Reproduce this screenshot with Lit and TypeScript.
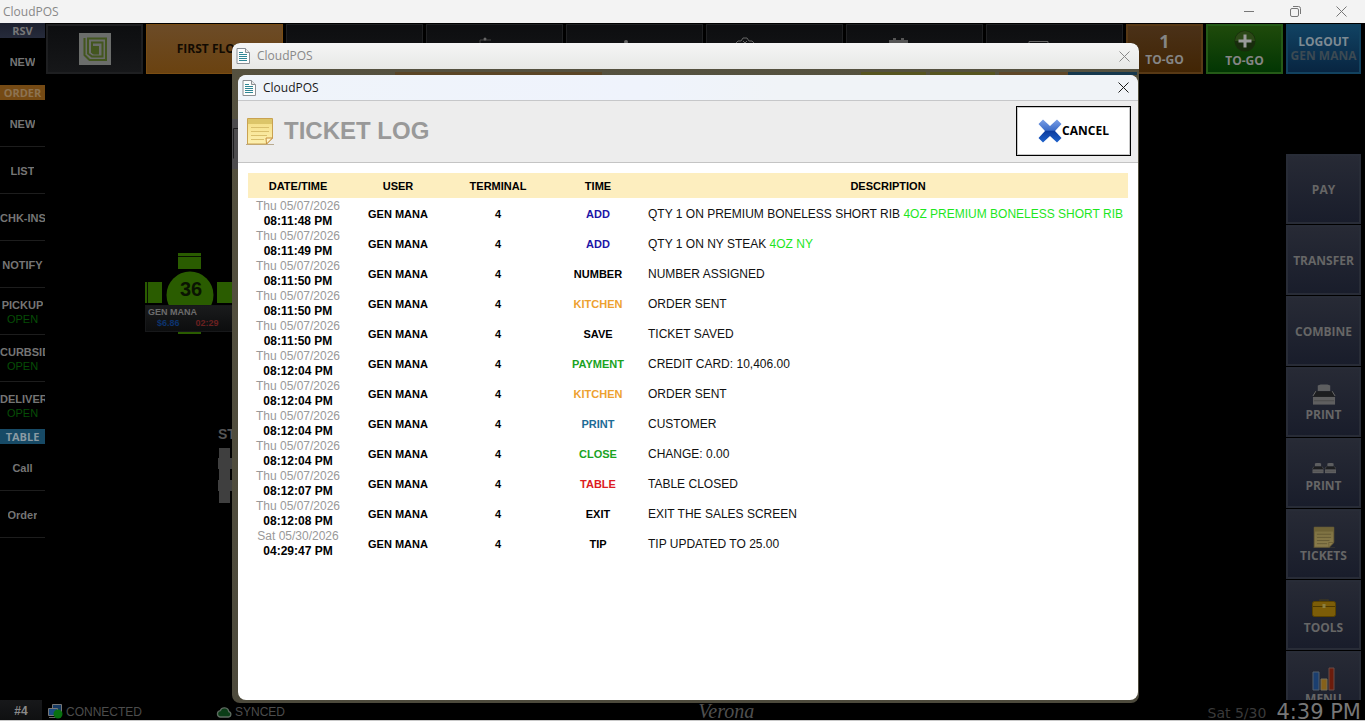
import { LitElement, html, css, svg, nothing } from "lit";
import { customElement, property } from "lit/decorators.js";
import { classMap } from "lit/directives/class-map.js";

interface LogEntry {
  day: string;
  time: string;
  action: string;
  tone: string;
  text: string;
  extra?: string;
}

const LOG: LogEntry[] = [
  { day: "Thu 05/07/2026", time: "08:11:48 PM", action: "ADD", tone: "navy", text: "QTY 1 ON PREMIUM BONELESS SHORT RIB", extra: "4OZ PREMIUM BONELESS SHORT RIB" },
  { day: "Thu 05/07/2026", time: "08:11:49 PM", action: "ADD", tone: "navy", text: "QTY 1 ON NY STEAK", extra: "4OZ NY" },
  { day: "Thu 05/07/2026", time: "08:11:50 PM", action: "NUMBER", tone: "plain", text: "NUMBER ASSIGNED" },
  { day: "Thu 05/07/2026", time: "08:11:50 PM", action: "KITCHEN", tone: "orange", text: "ORDER SENT" },
  { day: "Thu 05/07/2026", time: "08:11:50 PM", action: "SAVE", tone: "plain", text: "TICKET SAVED" },
  { day: "Thu 05/07/2026", time: "08:12:04 PM", action: "PAYMENT", tone: "green", text: "CREDIT CARD: 10,406.00" },
  { day: "Thu 05/07/2026", time: "08:12:04 PM", action: "KITCHEN", tone: "orange", text: "ORDER SENT" },
  { day: "Thu 05/07/2026", time: "08:12:04 PM", action: "PRINT", tone: "teal", text: "CUSTOMER" },
  { day: "Thu 05/07/2026", time: "08:12:04 PM", action: "CLOSE", tone: "green", text: "CHANGE: 0.00" },
  { day: "Thu 05/07/2026", time: "08:12:07 PM", action: "TABLE", tone: "red", text: "TABLE CLOSED" },
  { day: "Thu 05/07/2026", time: "08:12:08 PM", action: "EXIT", tone: "plain", text: "EXIT THE SALES SCREEN" },
  { day: "Sat 05/30/2026", time: "04:29:47 PM", action: "TIP", tone: "plain", text: "TIP UPDATED TO 25.00" },
];

const SIDE: { head: string; tone: string; items: [string, boolean][] }[] = [
  { head: "RSV", tone: "slate", items: [["NEW", false]] },
  {
    head: "ORDER",
    tone: "amber",
    items: [["NEW", false], ["LIST", false], ["CHK-INS", false], ["NOTIFY", false], ["PICKUP", true], ["CURBSIDE", true], ["DELIVERY", true]],
  },
  { head: "TABLE", tone: "blue", items: [["Call", false], ["Order", false]] },
];

const docIcon = html`<svg width="14" height="16" viewBox="0 0 14 16">
  <path d="M1 .5h8.500l4 4v11h-12.500z" fill="#fdfdfd" stroke="#8a8f94" />
  <path d="M9.500.5v4h4" fill="#e8e8e8" stroke="#8a8f94" />
  <path d="M3 4.500h4M3 6.500h8M3 8.500h8M3 10.500h8M3 12.500h8" stroke="#2f8796" />
</svg>`;

const noteIcon = (size: number, dim: boolean) => html`<svg width=${size} height=${size} viewBox="0 0 28 28">
  <defs>
    <linearGradient id="paper" x1="0" y1="0" x2="0" y2="1">
      <stop offset="0" stop-color=${dim ? "#7c7040" : "#f4dd83"} />
      <stop offset="1" stop-color=${dim ? "#8a7c4c" : "#fdf0b0"} />
    </linearGradient>
  </defs>
  <path d="M0 27.500h28" stroke=${dim ? "#3a3832" : "#b9aa90"} />
  <path d="M1.500 1.500h25v19.500l-6 6h-19z" fill="url(#paper)" stroke=${dim ? "#6a5d35" : "#c9a251"} />
  <path d="M2 2h24v5h-24z" fill=${dim ? "#6f6336" : "#dcc569"} />
  <path d="M5 10.500h18M5 14.500h18M5 18.500h16M5 22.500h13" stroke=${dim ? "#5e5430" : "#d9bf6c"} />
  <path d="M26.500 21h-6.500l.5 6z" fill=${dim ? "#8a7c4c" : "#fff3c8"} stroke=${dim ? "#6a5d35" : "#c48f3c"} />
</svg>`;

const printerShape = svg`
  <path d="M6 8v-6l3-1h7l3 1v6z" fill="#5d5e60" />
  <path d="M3 8h19l2 6h-23z" fill="#1d1e20" />
  <path d="M1 13l3-5M24 13l-3-5" stroke="#6d6d6d" />
  <path d="M1 14h23v8h-23z" fill="#5f5f60" />
  <path d="M2 18h21" stroke="#4a4a4a" />
`;

const closeGlyph = (size: number) => html`<svg width=${size} height=${size} viewBox="0 0 11 11">
  <path d="M.5.5l10 10M10.500.5l-10 10" stroke="currentColor" fill="none" />
</svg>`;

@customElement("title-bar")
export class TitleBar extends LitElement {
  @property() label = "";
  @property({ type: Boolean }) active = false;

  static styles = css`
    :host { display: block; }
    .bar {
      display: flex; align-items: center; gap: 7px; height: 26px; padding: 0 9px 0 4px;
      border-radius: 8px 8px 0 0; background: linear-gradient(#f5f5f5, #e7e8e6); color: #888;
      font: 12px/16px "Open Sans", "Noto Sans", sans-serif;
    }
    .bar.active {
      height: 25px; background: linear-gradient(90deg, #eff4fa, #eff3fc 45%, #f0f3f7 60%);
      color: #1a1a1a; border-bottom: 1px solid #c6c7c9;
    }
    .label { flex: 1; }
    .close { display: flex; border: 0; padding: 0; background: none; color: inherit; }
  `;

  render() {
    return html`<div class=${classMap({ bar: true, active: this.active })}>
      ${docIcon}<span class="label">${this.label}</span>
      <button class="close" aria-label="Close">${closeGlyph(11)}</button>
    </div>`;
  }
}

@customElement("ticket-log")
export class TicketLog extends LitElement {
  static styles = css`
    :host { display: flex; flex-direction: column; flex: 1; overflow: hidden; border-radius: 8px; background: #fff; color: #111; }
    .head {
      display: flex; align-items: center; gap: 10px; box-sizing: border-box; height: 62px;
      padding: 0 7px 1px 8px; background: #ededed; border-bottom: 1px solid #c4c4c4;
    }
    h1 { flex: 1; margin: 0; font-size: 24px; line-height: 28px; font-weight: bold; color: #999; }
    .cancel {
      display: flex; align-items: center; justify-content: center; width: 115px; height: 50px; padding: 0;
      border: 1px solid #000; outline: 1px solid #c8c8c8; outline-offset: -2px; background: #fff; color: #000;
      font: bold 12px/16px "Open Sans", "Noto Sans", sans-serif;
    }
    .scroll { flex: 1; padding: 10px; }
    table { width: 100%; border-collapse: separate; border-spacing: 0; table-layout: fixed; font-size: 12px; line-height: 15px; }
    .narrow { width: 100px; }
    th {
      height: 23px; padding: 2px 0 0; border-bottom: 1px solid transparent; background: #fdeebf;
      background-clip: padding-box; font-size: 11px; color: #000;
    }
    td { height: 30px; padding: 0; text-align: center; }
    .day { display: block; color: #999; }
    .time { display: block; font-weight: bold; color: #000; }
    .strong { font-weight: bold; font-size: 11px; color: #000; }
    .desc { text-align: left; white-space: nowrap; }
    .extra { color: #1ee61e; }
    .strong.navy { color: #1d16a6; }
    .strong.orange { color: #eda12f; }
    .strong.green { color: #1ba31f; }
    .strong.teal { color: #1e6c96; }
    .strong.red { color: #dd1c22; }
  `;

  render() {
    return html`
      <title-bar label="CloudPOS" active></title-bar>
      <header class="head">
        ${noteIcon(28, false)}
        <h1>TICKET LOG</h1>
        <button class="cancel">
          <svg width="24" height="24" viewBox="0 0 24 24">
            <defs>
              <linearGradient id="x" x1="0" y1="0" x2="0" y2="1">
                <stop offset="0" stop-color="#7b9fe6" /><stop offset=".46" stop-color="#3d6dc9" />
                <stop offset=".52" stop-color="#0d3d9f" /><stop offset="1" stop-color="#1f63cc" />
              </linearGradient>
            </defs>
            <path d="M5 0.500l7 6.500 7-6.500 4.500 4.500-6.500 7 6.500 7-4.500 4.500-7-6.500-7 6.500-4.500-4.500 6.500-7-6.500-7z" fill="url(#x)" />
          </svg>
          CANCEL
        </button>
      </header>
      <div class="scroll">
        <table>
          <thead>
            <tr>
              <th class="narrow" scope="col">DATE/TIME</th>
              <th class="narrow" scope="col">USER</th>
              <th class="narrow" scope="col">TERMINAL</th>
              <th class="narrow" scope="col">TIME</th>
              <th scope="col">DESCRIPTION</th>
            </tr>
          </thead>
          <tbody>
            ${LOG.map(
              (e) => html`<tr>
                <td><span class="day">${e.day}</span><span class="time">${e.time}</span></td>
                <td class="strong">GEN MANA</td>
                <td class="strong">4</td>
                <td class="strong ${e.tone}">${e.action}</td>
                <td class="desc">${e.text}${e.extra ? html` <span class="extra">${e.extra}</span>` : nothing}</td>
              </tr>`
            )}
          </tbody>
        </table>
      </div>
    `;
  }
}

@customElement("app-root")
export class AppRoot extends LitElement {
  static styles = css`
    :host {
      display: flex; flex-direction: column; position: relative; height: 100vh; overflow: hidden;
      background: #000; color: #6e6e6e; font-family: "Liberation Sans", Arial, sans-serif;
    }
    button { font: inherit; color: inherit; padding: 0; margin: 0; border: 0; background: none; box-sizing: border-box; }

    .chrome {
      display: flex; align-items: center; height: 23px; padding: 0 18px 0 3px; background: #f3f3f3; color: #888;
      font: 12px/16px "Open Sans", "Noto Sans", sans-serif; gap: 35px;
    }
    .chrome .name { flex: 1; }
    .chrome button { display: flex; color: #777; }

    .body { flex: 1; display: flex; min-height: 0; }
    .side { width: 45px; display: flex; flex-direction: column; overflow: hidden; }
    .side h2 {
      margin: 0; height: 15px; text-align: center; color: #777;
      font: bold 11px/15px "Open Sans", "Noto Sans", sans-serif;
    }
    .side .slate { background: linear-gradient(#1c202e, #262b3b); }
    .side .amber { background: #754a14; color: #8d7351; }
    .side .blue { background: #174a66; color: #8a9aa3; }
    .item {
      height: 47px; width: 45px; display: flex; flex-direction: column; align-items: center; justify-content: center;
      padding-top: 1px; border-bottom: 1px solid #1d1d1d; font-weight: bold; font-size: 11px; line-height: 14px; color: #757575; white-space: nowrap;
    }
    .item span { max-width: 100%; overflow: hidden; }
    .item.last { border-bottom-color: transparent; }
    .item .open { font-weight: normal; color: #064d06; }

    .main { flex: 1; display: flex; flex-direction: column; min-width: 0; padding-left: 1px; }
    .tabs { display: flex; gap: 3px; padding: 1px 4px 0 0; height: 50px; font: bold 12px/18px "Open Sans", "Noto Sans", sans-serif; }
    .tab { flex: 1; background: linear-gradient(#0d0e10, #161719); border: 1px solid #1f2022; overflow: hidden; display: flex; }
    .tab svg { flex: none; }
    .logo { flex: none; width: 97px; align-items: center; justify-content: center; border: 2px solid #1e1f21; }
    .floor { background: linear-gradient(#6c4b27, #6a4210); color: #120b02; border-color: #7a4d13; align-items: center; justify-content: center; }
    .act { width: 77px; display: flex; flex-direction: column; align-items: center; justify-content: center; padding-top: 2px; color: #858585; }
    .togo { background: linear-gradient(#4a3118, #422504); border: 2px solid #583915; }
    .plus { background: linear-gradient(#1f4a0b, #023603); border: 2px solid #245a17; }
    .out { width: 75px; padding: 0; background: linear-gradient(#114262, #082541); border: 2px solid #12425f; line-height: 14px; color: #7d8a93; }
    .out .who { color: #3c4a53; }
    .big { font-size: 18px; line-height: 20px; }

    .work { flex: 1; display: flex; min-height: 0; }
    .canvas { flex: 1; position: relative; }
    .rail { width: 75px; margin-right: 4px; padding-top: 80px; display: flex; flex-direction: column; gap: 1px; overflow: hidden; }
    .rail button {
      flex: none; height: 70px; display: flex; flex-direction: column; align-items: center; justify-content: center;
      padding-top: 2px; background: linear-gradient(#272a35, #191d2b); border: 2px solid #282c37; color: #666;
      font: bold 12px/16px "Open Sans", "Noto Sans", sans-serif;
    }
    .table36 { position: absolute; left: 99px; top: 179px; width: 90px; height: 82px; }
    .table36 .num { position: absolute; left: 21px; top: 23px; width: 50px; text-align: center; font: bold 20px/26px "Liberation Sans", Arial, sans-serif; color: #0a1402; }
    .tag {
      position: absolute; left: 0; top: 52px; width: 90px; height: 27px; box-sizing: border-box; padding: 1px 2px;
      background: linear-gradient(#1a1b1c, #0c0d0e); border: 1px solid #17181a; font: bold 9px/11px "Liberation Sans", Arial, sans-serif; color: #6c6c6c;
    }
    .tag .row { display: flex; gap: 16px; padding-left: 9px; }
    .tag .cash { color: #0c336e; }
    .tag .wait { color: #6b2020; }
    .station { position: absolute; left: 172px; top: 352px; color: #555; font: bold 14px/16px "Liberation Sans", Arial, sans-serif; }
    .station svg { display: block; margin-top: 6px; }

    .foot { display: flex; align-items: center; height: 21px; box-sizing: border-box; border-bottom: 1px solid #c9c9c9; font-size: 12px; line-height: 16px; color: #4c4c4c; }
    .foot .term { width: 42px; height: 20px; padding-top: 2px; background: linear-gradient(#17181a, #0f1011); font-weight: bold; color: #8a8a8a; }
    .foot .state { display: flex; align-items: center; gap: 3px; padding-left: 6px; padding-top: 3px; }
    .foot .sync { padding-left: 74px; }
    .foot .site { flex: 1; padding: 2px 40px 0 0; text-align: center; font: italic 20px/20px "Liberation Serif", "Times New Roman", serif; color: #4f4f4f; }
    .foot .date { font: 14px/20px "Open Sans", "Noto Sans", sans-serif; font-family: "DejaVu Sans", sans-serif; padding-top: 5px; color: #3a3a3a; }
    .foot .clock { font: 21px/20px "DejaVu Sans", sans-serif; color: #777; padding: 3px 4px 0 10px; }

    .outer {
      position: absolute; inset: 43px 226px 18px 232px; display: flex; flex-direction: column;
      border-radius: 8px; background: linear-gradient(#55513f, #4d4a3c); overflow: hidden;
    }
    .strip { display: flex; height: 6px; padding: 3px 2px 0 163px; box-sizing: border-box; }
    .strip span { width: 69px; }
    .strip .wide { width: 207px; background: #5a4526; margin-right: auto; }
    .strip .olive { background: #575520; border-right: 4px solid #55513f; box-sizing: border-box; }
    .strip .brown { background: #5f4728; }
    .strip .navy { background: #16384d; }
    .inner { flex: 1; display: flex; padding: 0 1px 3px 0; min-height: 0; }
    .edge { width: 6px; padding-top: 44px; }
    .edge svg { display: block; }
  `;

  private side() {
    return html`<nav class="side" aria-label="Orders">
      ${SIDE.map(
        (g) => html`<h2 class=${g.tone}>${g.head}</h2>
          ${g.items.map(
            ([name, open], i) => html`<button class=${classMap({ item: true, last: g.head !== "TABLE" && i === g.items.length - 1 })}>
              <span>${name}</span>${open ? html`<span class="open">OPEN</span>` : nothing}
            </button>`
          )}`
      )}
    </nav>`;
  }

  private tabs() {
    const peeks = [
      nothing,
      svg`<path d="M53 18v-3h11" stroke="#444" fill="none" /><circle cx="58" cy="14" r="1.500" fill="#666" />`,
      svg`<circle cx="59" cy="17" r="2" fill="#666" />`,
      svg`<path d="M29 18l2-2h3l2-3h4l2 3h3l2 2M36 16l2 2 2-2" stroke="#666" fill="none" />`,
      svg`<path d="M42 18v-3h4v-2h3v2h5v-2h3v2h4v3z" fill="#555" />`,
      svg`<path d="M42 18v-1.500h19v1.500" stroke="#666" fill="none" />`,
    ];
    return html`<div class="tabs">
      <button class="tab logo" aria-label="Home">
        <svg width="32" height="32" viewBox="0 0 32 32">
          <path d="M0 0h32v32h-32z" fill="#6b6d6b" />
          <path d="M5.500 5v17l5 5h16.500v-21.500h-18v15l4 3h10.500v-14h-10.500v9.500l2 1.500h5" fill="none" stroke="#43561f" stroke-width="2" />
          <path d="M12 13h8v8h-6l-2-2z" fill="#43561f" />
        </svg>
      </button>
      <button class="tab floor">FIRST FLOOR</button>
      ${peeks.map((p, i) => html`<button class="tab" aria-label="Section ${i + 2}"><svg width="100" height="46" viewBox="0 0 100 46">${p}</svg></button>`)}
      <button class="act togo"><span class="big">1</span><span>TO-GO</span></button>
      <button class="act plus">
        <svg width="22" height="22" viewBox="0 0 22 22">
          <circle cx="11" cy="11" r="10.500" fill="#182c0c" /><path d="M1 11a10 10 0 0 1 20 0z" fill="#2c4817" />
          <path d="M11 4.500v13M4.500 11h13" stroke="#9a9a9a" stroke-width="3" />
        </svg>
        <span>TO-GO</span>
      </button>
      <button class="act out"><span>LOGOUT</span><span class="who">GEN MANA</span></button>
    </div>`;
  }

  private rail() {
    const printer = html`<svg width="24" height="24" viewBox="0 0 25 24">${printerShape}</svg>`;
    const pair = html`<svg width="24" height="24" viewBox="0 0 50 50"><g transform="translate(0 18)">${printerShape}</g><g transform="translate(26 18)">${printerShape}</g></svg>`;
    const box = html`<svg width="24" height="24" viewBox="0 0 24 24">
      <path d="M8 6v-2h8v2" stroke="#3b3623" stroke-width="1.500" fill="none" />
      <rect x=".5" y="5.500" width="23" height="15" rx="2" fill="#7c5d08" stroke="#5a4300" /><path d="M1 10.500h22" stroke="#4c3800" />
      <path d="M10.500 8h3v4h-3z" fill="#8b8041" />
    </svg>`;
    const bars = html`<svg width="24" height="24" viewBox="0 0 24 24">
      <path d="M1 5h6v18h-6z" fill="#1b3f70" stroke="#54606c" /><path d="M9 12h6v11h-6z" fill="#86611a" stroke="#766e58" />
      <path d="M17 1h5v22h-5z" fill="#6c1c0c" stroke="#6b4c46" />
    </svg>`;
    return html`<nav class="rail" aria-label="Actions">
      <button>PAY</button><button>TRANSFER</button><button>COMBINE</button>
      <button>${printer}PRINT</button><button>${pair}PRINT</button>
      <button>${noteIcon(22, true)}TICKETS</button><button>${box}TOOLS</button><button>${bars}MENU</button>
    </nav>`;
  }

  render() {
    return html`
      <div class="chrome">
        <span class="name">CloudPOS</span>
        <button aria-label="Minimize"><svg width="11" height="11" viewBox="0 0 11 11"><path d="M0 5.500h10" stroke="#777" /></svg></button>
        <button aria-label="Restore"><svg width="11" height="11" viewBox="0 0 11 11" fill="none" stroke="#777"><rect x=".5" y="2.500" width="8" height="8" rx="1.500" /><path d="M3 .5h5.500a2 2 0 0 1 2 2v5.500" /></svg></button>
        <button aria-label="Close">${closeGlyph(11)}</button>
      </div>
      <div class="body">
        ${this.side()}
        <div class="main">
          ${this.tabs()}
          <div class="work">
            <div class="canvas">
              <div class="table36">
                <svg width="90" height="82" viewBox="0 0 90 82">
                  <path d="M33 0h23v16h-23zM33 79h23v2h-23zM0 29h17v21h-17zM72 29h18v21h-18z" fill="#2a5c00" />
                  <path d="M33 3.500h23M2.500 29v21" stroke="#081200" /><circle cx="45" cy="42" r="23.500" fill="#2a5c00" />
                </svg>
                <span class="num">36</span>
                <div class="tag">GEN MANA<div class="row"><span class="cash">$6.86</span><span class="wait">02:29</span></div></div>
              </div>
              <div class="station">ST
                <svg width="60" height="55" viewBox="0 0 60 55"><path d="M1 0h11v10h48v11h-48v11h48v11h-48v12h-11v-12h-1v-11h1v-11h-1v-11h1z" fill="#3f3f3f" /></svg>
              </div>
            </div>
            ${this.rail()}
          </div>
        </div>
      </div>
      <footer class="foot">
        <button class="term">#4</button>
        <span class="state">
          <svg width="15" height="15" viewBox="0 0 15 15">
            <path d="M4.500.5h9v8h-9z" fill="#163a63" stroke="#777" /><path d="M.5 4.500h9v7h-9z" fill="#1b4a80" stroke="#777" />
            <path d="M1 13.500h8" stroke="#666" /><circle cx="10" cy="10" r="4.500" fill="#08700f" />
          </svg>CONNECTED
        </span>
        <span class="state sync">
          <svg width="16" height="12" viewBox="0 0 16 12"><path d="M4 11h8.500a2.700 2.700 0 0 0 .3-5.300a4.500 4.500 0 0 0-8.600-1a3.200 3.200 0 0 0-.2 6.300z" fill="#0b3d17" stroke="#5d6b60" stroke-width="1.300" /></svg>SYNCED
        </span>
        <span class="site">Verona</span>
        <span class="date">Sat 5/30</span><span class="clock">4:39 PM</span>
      </footer>
      <section class="outer" aria-label="CloudPOS">
        <title-bar label="CloudPOS"></title-bar>
        <div class="strip"><span class="wide"></span><span class="olive"></span><span class="olive"></span><span class="brown"></span><span class="navy"></span></div>
        <div class="inner">
          <div class="edge"><svg width="6" height="50" viewBox="0 0 6 50"><path d="M0 0h6v50h-6z" fill="#4c4b4d" /><path d="M6 9.500h-4.500v30" stroke="#1c1c1e" fill="none" /></svg></div>
          <ticket-log></ticket-log>
        </div>
      </section>
    `;
  }
}
